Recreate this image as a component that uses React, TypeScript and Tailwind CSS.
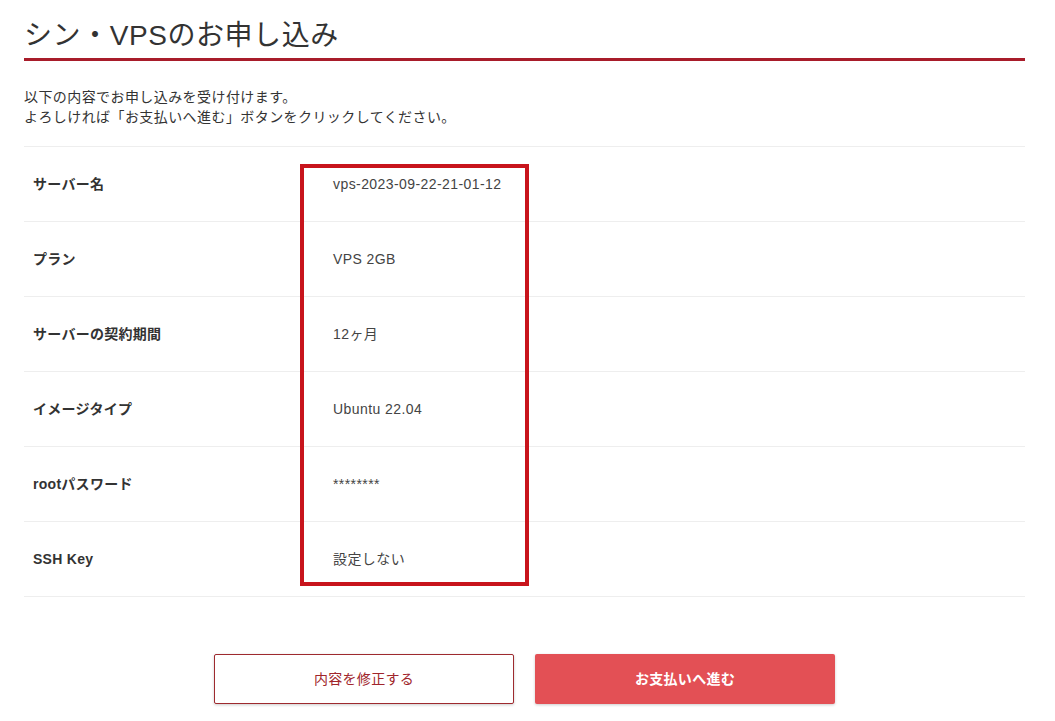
const rows = [
  { label: "サーバー名", value: "vps-2023-09-22-21-01-12" },
  { label: "プラン", value: "VPS 2GB" },
  { label: "サーバーの契約期間", value: "12ヶ月" },
  { label: "イメージタイプ", value: "Ubuntu 22.04" },
  { label: "rootパスワード", value: "********" },
  { label: "SSH Key", value: "設定しない" },
];

export default function App() {
  return (
    <div
      className="min-h-screen bg-white text-[#333]"
      style={{ fontFamily: '"Liberation Sans", "Noto Sans CJK JP", sans-serif' }}
    >
      <div className="relative ml-6 w-[1001px]">
        <h1 className="border-b-[3px] border-[#a81c2a] pt-4 pb-[2px] text-[28px] leading-[40px] font-normal tracking-[0.02em] text-[#333]">
          シン・VPSのお申し込み
        </h1>
        <p className="mt-[26px] text-[14px] leading-[20px] tracking-[0.03em] text-[#333]">
          以下の内容でお申し込みを受け付けます。
          <br />
          よろしければ「お支払いへ進む」ボタンをクリックしてください。
        </p>

        <div className="mt-[19px] border-t border-[#eeeeee]">
          {rows.map((row) => (
            <div key={row.label} className="flex h-[75px] items-center border-b border-[#eeeeee]">
              <div className="w-[300px] pl-[9px] text-[14px] font-bold tracking-[0.02em] text-[#333]">
                {row.label}
              </div>
              <div className="pl-[9px] text-[14px] tracking-[0.03em] text-[#444]">{row.value}</div>
            </div>
          ))}
        </div>

        <div className="pointer-events-none absolute top-[164px] left-[276px] h-[422px] w-[229px] border-4 border-[#c8141c]" />

        <div className="mt-[57px] flex justify-center gap-[21px]">
          <button className="h-[50px] w-[300px] rounded-[2px] border border-[#9e2a2f] bg-white text-[14px] tracking-[0.02em] text-[#a0252b] shadow-[0_1px_3px_rgba(0,0,0,0.2)]">
            内容を修正する
          </button>
          <button className="h-[50px] w-[300px] rounded-[2px] bg-[#e35055] text-[14px] font-bold tracking-[0.02em] text-white shadow-[0_1px_3px_rgba(0,0,0,0.2)]">
            お支払いへ進む
          </button>
        </div>
      </div>
    </div>
  );
}
